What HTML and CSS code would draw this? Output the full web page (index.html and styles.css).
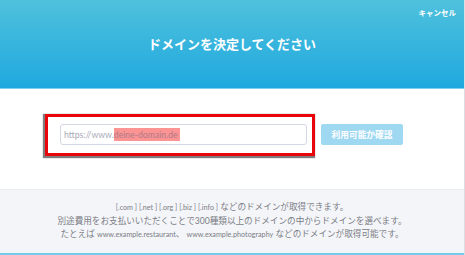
FILE: index.html
```html
<!DOCTYPE html>
<html lang="ja">
<head>
<meta charset="utf-8">
<title>ドメインを決定してください</title>
<link rel="stylesheet" href="styles.css">
</head>
<body>
<div class="page">
  <header class="hero">
    <div class="hero-top"><a class="cancel" href="#">キャンセル</a></div>
    <h1 class="title">ドメインを決定してください</h1>
  </header>
  <main class="search">
    <div class="search-row">
      <div class="marked">
        <div class="field"><span class="prefix">https://www.</span><span class="hl">deine-domain.de</span></div>
      </div>
      <button class="check" type="button">利用可能か確認</button>
    </div>
  </main>
  <footer class="info">
    <p><span class="lat">[.com ] [.net ] [.org ] [.biz ] [.info ]</span> などのドメインが取得できます。</p>
    <p>別途費用をお支払いいただくことで<span class="num">300</span>種類以上のドメインの中からドメインを選べます。</p>
    <p>たとえば <span class="lat">www.example.restaurant</span>、 <span class="lat">www.example.photography</span> などのドメインが取得可能です。</p>
  </footer>
</div>
</body>
</html>
```

FILE: styles.css
```css
* { box-sizing: border-box; }
html, body { margin: 0; padding: 0; background: #fff; }
body { font-family: "Lato", "Noto Sans CJK JP", sans-serif; }
.page {
  width: 465px;
  height: 255px;
  border-right: 1px solid #dcdde2;
  display: flex;
  flex-direction: column;
}
.hero {
  height: 89px;
  background: linear-gradient(#4fc1dc, #1fa8df);
  border-bottom: 1px solid #7dd0ee;
  color: #fff;
  display: flex;
  flex-direction: column;
}
.hero-top {
  display: flex;
  justify-content: flex-end;
  padding: 7px 8px 0 0;
}
.cancel {
  color: #fff;
  text-decoration: none;
  font-family: "Noto Sans CJK JP", sans-serif;
  font-size: 7.5px;
  font-weight: 700;
  line-height: 11px;
}
.title {
  margin: 17px 0 0;
  text-align: center;
  font-family: "Noto Sans CJK JP", sans-serif;
  font-size: 13px;
  font-weight: 700;
  line-height: 18px;
}
.search {
  height: 100px;
  padding: 25px 0 0 45px;
}
.search-row {
  display: flex;
  align-items: center;
  gap: 6px;
}
.marked {
  width: 270px;
  height: 42px;
  border: 3px solid #e8060c;
  box-shadow: -1px 1px 1px 1px rgba(40,40,40,0.6);
  padding: 7px 5px 0 12px;
}
.field {
  width: 247px;
  height: 21px;
  border: 1px solid #d3d6e4;
  border-radius: 3px;
  background: #fff;
  padding-left: 3px;
  display: flex;
  align-items: center;
  font-size: 8.7px;
  color: #a9abb8;
}
.hl {
  background: rgba(250, 90, 90, 0.65);
  color: #b07a86;
  line-height: 13px;
  padding-right: 2px;
}
.check {
  width: 82px;
  height: 21px;
  border: 0;
  border-radius: 2px;
  background: #9fd8f1;
  color: #fff;
  font-family: "Noto Sans CJK JP", sans-serif;
  font-size: 8.7px;
  font-weight: 700;
  padding: 0;
  margin-top: -1px;
}
.info {
  flex: 1;
  background: #f4f5f9;
  border-top: 1px solid #ecedf1;
  border-bottom: 2px solid #70cbe9;
  padding-top: 11px;
  text-align: center;
  color: #7b7d85;
  font-family: "Lato", "Noto Sans CJK JP", sans-serif;
  font-size: 8.6px;
}
.info p {
  margin: 0;
  line-height: 13.5px;
}
.info .lat {
  font-size: 7.2px;
}
.info .num {
  font-size: 8.6px;
}
```
